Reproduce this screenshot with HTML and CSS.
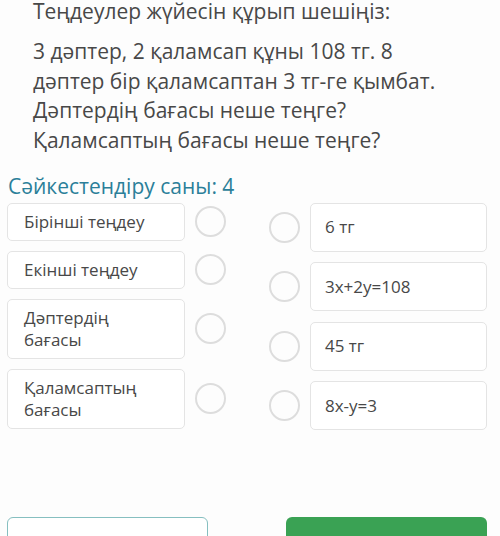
FILE: index.html
```html
<!DOCTYPE html>
<html lang="kk">
<head>
<meta charset="utf-8">
<link rel="stylesheet" href="styles.css">
</head>
<body>
<div class="page">
  <div class="question">
    <p class="title">Теңдеулер жүйесін құрып шешіңіз:</p>
    <p class="body">3 дәптер, 2 қаламсап құны 108 тг. 8<br>дәптер бір қаламсаптан 3 тг-ге қымбат.<br>Дәптердің бағасы неше теңге?<br>Қаламсаптың бағасы неше теңге?</p>
  </div>
  <h2 class="count">Сәйкестендіру саны: 4</h2>
  <div class="match">
    <div class="col left">
      <div class="row"><div class="box">Бірінші теңдеу</div><span class="dot"></span></div>
      <div class="row"><div class="box">Екінші теңдеу</div><span class="dot"></span></div>
      <div class="row"><div class="box">Дәптердің<br>бағасы</div><span class="dot"></span></div>
      <div class="row"><div class="box">Қаламсаптың<br>бағасы</div><span class="dot"></span></div>
    </div>
    <div class="col right">
      <div class="row"><span class="dot"></span><div class="box">6 тг</div></div>
      <div class="row"><span class="dot"></span><div class="box">3x+2y=108</div></div>
      <div class="row"><span class="dot"></span><div class="box">45 тг</div></div>
      <div class="row"><span class="dot"></span><div class="box">8x-y=3</div></div>
    </div>
  </div>
  <div class="actions">
    <button class="btn outline" type="button"></button>
    <button class="btn primary" type="button"></button>
  </div>
</div>
</body>
</html>
```

FILE: styles.css
```css
html, body {
  margin: 0;
  padding: 0;
  background: #fdfdfd;
}
body {
  font-family: "Open Sans", "Noto Sans", sans-serif;
  color: #484848;
  overflow: hidden;
}
.page {
  padding: 0 13px 0 7px;
}
.question {
  padding-left: 26px;
}
.title {
  margin: 0;
  font-size: 21px;
  line-height: 23px;
  white-space: nowrap;
}
.body {
  margin: 14.2px 0 0;
  font-size: 21px;
  line-height: 29.5px;
  white-space: nowrap;
}
.count {
  margin: 18.8px 0 0 1px;
  font-size: 21px;
  font-weight: 400;
  line-height: 24px;
  color: #2b7f99;
}
.match {
  margin-top: 5px;
  display: flex;
  justify-content: space-between;
}
.col {
  display: flex;
  flex-direction: column;
  gap: 10px;
}
.col.right {
  gap: 10.5px;
}
.row {
  display: flex;
  align-items: center;
  gap: 10px;
}
.box {
  box-sizing: border-box;
  border: 1px solid #e4e4e4;
  border-radius: 5px;
  background: #fff;
  font-size: 17px;
  line-height: 22px;
}
.left .box {
  width: 178px;
  padding: 7px 16px;
}
.right .box {
  width: 177px;
  height: 49px;
  padding: 12px 14px;
  display: flex;
  align-items: center;
}
.dot {
  box-sizing: border-box;
  width: 31px;
  height: 31px;
  border-radius: 50%;
  border: 2.5px solid #dddddd;
  flex: none;
}
.right .row {
  gap: 10.5px;
}
.actions {
  margin-top: 87px;
  display: flex;
  justify-content: space-between;
}
.btn {
  width: 201px;
  height: 44px;
  border-radius: 6px;
  padding: 0;
}
.btn.outline {
  background: #fff;
  border: 1px solid #86bfc0;
}
.btn.primary {
  background: #3aa254;
  border: none;
}
```
